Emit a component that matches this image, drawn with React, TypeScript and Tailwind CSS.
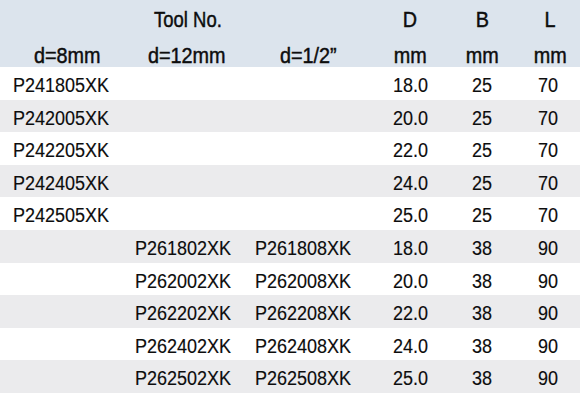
import React from 'react';

interface ToolRow {
  d8?: string;
  d12?: string;
  dHalf?: string;
  D: string;
  B: string;
  L: string;
}

const rows: ToolRow[] = [
  { d8: 'P241805XK', D: '18.0', B: '25', L: '70' },
  { d8: 'P242005XK', D: '20.0', B: '25', L: '70' },
  { d8: 'P242205XK', D: '22.0', B: '25', L: '70' },
  { d8: 'P242405XK', D: '24.0', B: '25', L: '70' },
  { d8: 'P242505XK', D: '25.0', B: '25', L: '70' },
  { d12: 'P261802XK', dHalf: 'P261808XK', D: '18.0', B: '38', L: '90' },
  { d12: 'P262002XK', dHalf: 'P262008XK', D: '20.0', B: '38', L: '90' },
  { d12: 'P262202XK', dHalf: 'P262208XK', D: '22.0', B: '38', L: '90' },
  { d12: 'P262402XK', dHalf: 'P262408XK', D: '24.0', B: '38', L: '90' },
  { d12: 'P262502XK', dHalf: 'P262508XK', D: '25.0', B: '38', L: '90' },
];

const cols = 'grid grid-cols-[122px_120px_130px_76px_69px_63px]';

// condensed look: Arial widths squeezed a little
const Left: React.FC<{ children?: React.ReactNode }> = ({ children }) => (
  <span className="inline-block origin-left scale-x-90 whitespace-nowrap">{children}</span>
);
const Mid: React.FC<{ children?: React.ReactNode }> = ({ children }) => (
  <span className="inline-block origin-center scale-x-90 whitespace-nowrap">{children}</span>
);

export default function App() {
  return (
    <div
      className="w-[580px] h-[396px] bg-white text-[#0d0d0d]"
      style={{ fontFamily: '"Liberation Sans", Arial, sans-serif' }}
    >
      {/* header */}
      <div className="bg-[#dce4ed] h-[67px] text-[22px] [-webkit-text-stroke:0.45px_#0d0d0d]">
        <div className={`${cols} h-[33.5px] items-center pt-[3px]`}>
          <div />
          <div className="pl-[32px]">
            <span className="inline-block origin-left scale-x-[0.84] whitespace-nowrap">Tool No.</span>
          </div>
          <div />
          <div className="text-center"><Mid>D</Mid></div>
          <div className="text-center"><Mid>B</Mid></div>
          <div className="text-center pl-[3px]"><Mid>L</Mid></div>
        </div>
        <div className={`${cols} h-[33.5px] items-center pt-[5px]`}>
          <div className="pl-[34px]"><Left>d=8mm</Left></div>
          <div className="pl-[26px]"><Left>d=12mm</Left></div>
          <div className="pl-[38px]"><Left>d=1/2”</Left></div>
          <div className="text-center"><Mid>mm</Mid></div>
          <div className="text-center"><Mid>mm</Mid></div>
          <div className="text-center pl-[3px]"><Mid>mm</Mid></div>
        </div>
      </div>

      {/* body */}
      {rows.map((row, i) => (
        <div
          key={i}
          className={`${cols} h-[32.6px] items-center pt-[3px] text-[20px] [-webkit-text-stroke:0.15px_#0d0d0d] ${
            i % 2 === 1 ? 'bg-[#ebebed]' : 'bg-white'
          }`}
        >
          <div className="pl-[13px]"><Left>{row.d8}</Left></div>
          <div className="pl-[13px]"><Left>{row.d12}</Left></div>
          <div className="pl-[13px]"><Left>{row.dHalf}</Left></div>
          <div className="text-center"><Mid>{row.D}</Mid></div>
          <div className="text-center"><Mid>{row.B}</Mid></div>
          <div className="text-center"><Mid>{row.L}</Mid></div>
        </div>
      ))}
    </div>
  );
}
